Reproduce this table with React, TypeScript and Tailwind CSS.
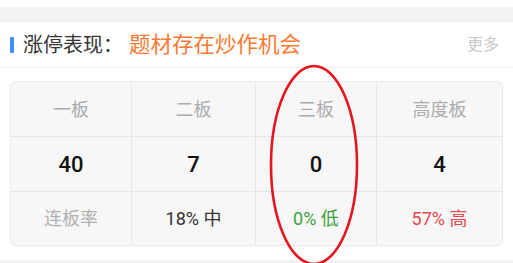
import React from "react";

type Cell = { text: string; color: string };

const heads = ["一板", "二板", "三板", "高度板"];
const counts = ["40", "7", "0", "4"];
const rates: Cell[] = [
  { text: "连板率", color: "text-[#b0b0b0]" },
  { text: "18% 中", color: "text-[#333333]" },
  { text: "0% 低", color: "text-[#3ba03b]" },
  { text: "57% 高", color: "text-[#e8474b]" },
];

const font = "font-['Roboto','Noto_Sans_CJK_SC',sans-serif]";

export default function App() {
  return (
    <div className={`relative h-[263px] w-[513px] overflow-hidden bg-white ${font}`}>
      <div className="h-[7px]" />
      <div className="h-[15px] bg-[#f2f2f2]" />

      {/* header */}
      <div className="flex h-[46px] items-center border-b border-[#eeeeee] pl-[10px] pr-[14px]">
        <div className="h-[16px] w-[4px] rounded-[1px] bg-[#3d8ef7]" />
        <div className="ml-[9px] text-[20px] leading-none text-[#333333]">涨停表现：</div>
        <div className="ml-[6px] text-[21.5px] leading-none text-[#fb7a33]">题材存在炒作机会</div>
        <div className="ml-auto text-[16px] leading-none text-[#c8c8c8]">更多</div>
      </div>

      {/* table */}
      <div className="px-[10px] pt-[13px]">
        <div className="overflow-hidden rounded-[6px] border border-[#e8e8ee] bg-[#f7f7f8]">
          <div className="grid grid-cols-[120px_124px_121px_1fr]">
            {heads.map((h, i) => (
              <div
                key={h}
                className={`flex h-[55px] items-center justify-center border-b border-[#e6e6ec] text-[18px] text-[#acacac] ${i > 0 ? "border-l" : ""}`}
              >
                {h}
              </div>
            ))}
            {counts.map((c, i) => (
              <div
                key={i}
                className={`flex h-[55px] items-center justify-center border-b border-[#e6e6ec] text-[22px] font-medium text-[#111111] ${i > 0 ? "border-l" : ""}`}
              >
                {c}
              </div>
            ))}
            {rates.map((r, i) => (
              <div
                key={i}
                className={`flex h-[53px] items-center justify-center border-[#e6e6ec] text-[18px] ${r.color} ${i > 0 ? "border-l" : ""}`}
              >
                {r.text}
              </div>
            ))}
          </div>
        </div>
      </div>

      <div className="mt-[14px] h-[4px] bg-[#f2f2f2]" />

      {/* hand-drawn highlight */}
      <svg className="pointer-events-none absolute left-0 top-0" width="513" height="263">
        <ellipse cx="314" cy="165" rx="43" ry="99" fill="none" stroke="#e5161d" strokeWidth="2.6" />
      </svg>
    </div>
  );
}
